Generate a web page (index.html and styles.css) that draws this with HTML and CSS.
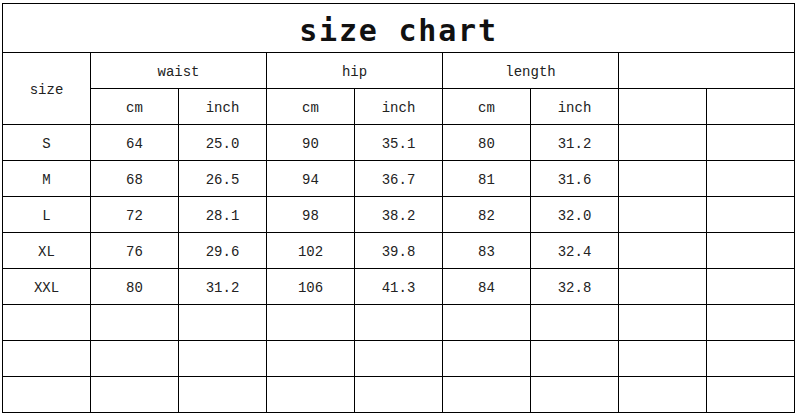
FILE: index.html
```html
<!DOCTYPE html>
<html>
<head>
<meta charset="utf-8">
<title>size chart</title>
<link rel="stylesheet" href="styles.css">
</head>
<body>
<div class="chart">
  <div class="cell title">size chart</div>

  <div class="cell size-head">size</div>
  <div class="cell span2">waist</div>
  <div class="cell span2">hip</div>
  <div class="cell span2">length</div>
  <div class="cell span2"></div>

  <div class="cell">cm</div><div class="cell">inch</div>
  <div class="cell">cm</div><div class="cell">inch</div>
  <div class="cell">cm</div><div class="cell">inch</div>
  <div class="cell"></div><div class="cell"></div>

  <div class="cell">S</div><div class="cell">64</div><div class="cell">25.0</div><div class="cell">90</div><div class="cell">35.1</div><div class="cell">80</div><div class="cell">31.2</div><div class="cell"></div><div class="cell"></div>
  <div class="cell">M</div><div class="cell">68</div><div class="cell">26.5</div><div class="cell">94</div><div class="cell">36.7</div><div class="cell">81</div><div class="cell">31.6</div><div class="cell"></div><div class="cell"></div>
  <div class="cell">L</div><div class="cell">72</div><div class="cell">28.1</div><div class="cell">98</div><div class="cell">38.2</div><div class="cell">82</div><div class="cell">32.0</div><div class="cell"></div><div class="cell"></div>
  <div class="cell">XL</div><div class="cell">76</div><div class="cell">29.6</div><div class="cell">102</div><div class="cell">39.8</div><div class="cell">83</div><div class="cell">32.4</div><div class="cell"></div><div class="cell"></div>
  <div class="cell">XXL</div><div class="cell">80</div><div class="cell">31.2</div><div class="cell">106</div><div class="cell">41.3</div><div class="cell">84</div><div class="cell">32.8</div><div class="cell"></div><div class="cell"></div>

  <div class="cell"></div><div class="cell"></div><div class="cell"></div><div class="cell"></div><div class="cell"></div><div class="cell"></div><div class="cell"></div><div class="cell"></div><div class="cell"></div>
  <div class="cell"></div><div class="cell"></div><div class="cell"></div><div class="cell"></div><div class="cell"></div><div class="cell"></div><div class="cell"></div><div class="cell"></div><div class="cell"></div>
  <div class="cell"></div><div class="cell"></div><div class="cell"></div><div class="cell"></div><div class="cell"></div><div class="cell"></div><div class="cell"></div><div class="cell"></div><div class="cell"></div>
</div>
</body>
</html>
```
FILE: styles.css
```css
html, body {
  margin: 0;
  padding: 0;
  background: #fff;
}

body {
  padding: 3px 0 0 2px;
}

.chart {
  display: grid;
  grid-template-columns: repeat(9, 87px);
  grid-template-rows: 48px repeat(10, 35px);
  gap: 1px;
  padding: 1px;
  background: #000;
  width: max-content;
}

.cell {
  background: #fff;
  display: flex;
  align-items: center;
  justify-content: center;
  padding-top: 2px;
  font-family: "Liberation Mono", "DejaVu Sans Mono", monospace;
  font-size: 14px;
  color: #222;
}

.title {
  grid-column: 1 / -1;
  font-family: "DejaVu Sans Mono", "Liberation Mono", monospace;
  font-weight: bold;
  font-size: 30px;
  letter-spacing: 1.8px;
  color: #111;
  padding-top: 5px;
}

.size-head {
  grid-row: span 2;
}

.span2 {
  grid-column: span 2;
}
```
